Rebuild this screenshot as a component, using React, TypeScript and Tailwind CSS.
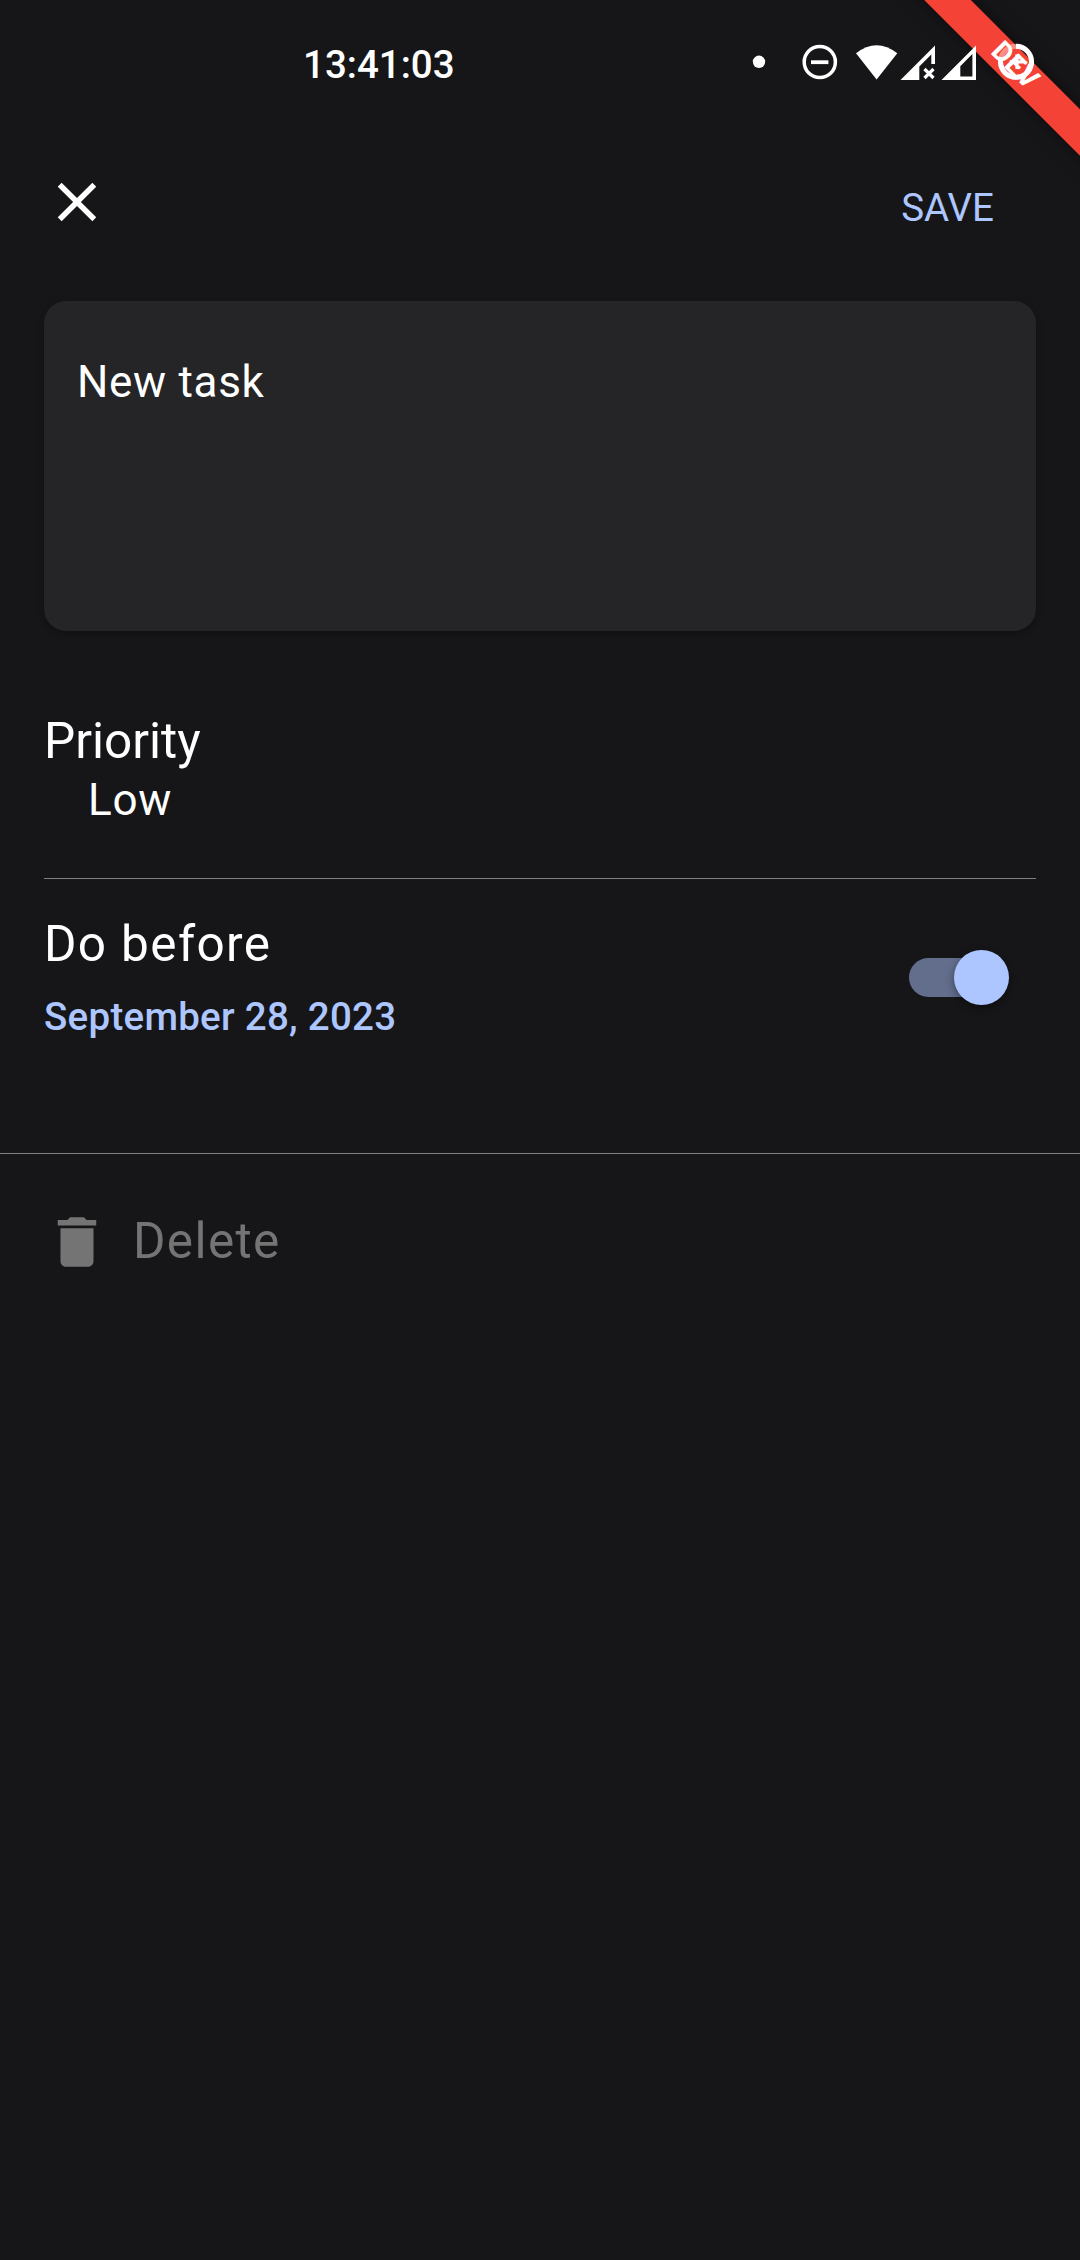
import type { ReactNode } from "react";

function Icon({ children, className }: { children: ReactNode; className: string }) {
  return (
    <svg viewBox="0 0 24 24" fill="currentColor" className={className}>
      {children}
    </svg>
  );
}

function StatusIcons() {
  return (
    <svg width="300" height="60" viewBox="740 30 300 60" fill="none" className="block">
      <circle cx="759" cy="61.8" r="6.2" fill="#fff" />
      <circle cx="819.8" cy="62" r="15.6" stroke="#fff" strokeWidth="3.5" />
      <path d="M811 62.2h17.4" stroke="#fff" strokeWidth="3.8" />
      <path d="M856 53.3Q876.5 37.2 897.3 53.3L876.6 79.5Z" fill="#fff" />
      <path d="M900.5 80L935 45.5V64H931.3V54.5L919.3 66.5V80Z" fill="#fff" />
      <path d="M924.5 69L933.5 78M933.5 69L924.5 78" stroke="#fff" strokeWidth="3.2" />
      <path d="M941.5 80L976 45.5V80ZM960.3 76.4H972.4V54L960.3 66.2Z" fill="#fff" fillRule="evenodd" />
      <circle cx="1016" cy="61.8" r="15.5" stroke="#fff" strokeOpacity="0.4" strokeWidth="5" />
      <path d="M1016 46.3A15.5 15.5 0 1 1 1001.2 57.3" stroke="#fff" strokeWidth="5" />
      <path d="M1017 54.5v14.6M1009.7 61.8h14.6" stroke="#fff" strokeWidth="3.2" />
    </svg>
  );
}

function DevRibbon() {
  return (
    <div className="absolute top-0 right-0 h-[220px] w-[220px] overflow-hidden">
      <div className="absolute top-[49.5px] left-[4px] flex h-[33px] w-[300px] rotate-45 items-center justify-center bg-[#f44336] pb-[3px] text-[28px] leading-none font-bold tracking-[0.5px] text-white shadow-[0_0_16px_rgba(0,0,0,0.5)]">
        DEV
      </div>
    </div>
  );
}

export default function App() {
  return (
    <div className="relative flex h-[2260px] w-[1080px] flex-col overflow-hidden bg-[#161618] font-['Roboto',sans-serif] text-white">
      <DevRibbon />
      <header className="relative flex h-[120px] items-start justify-between pt-[30px] pr-[40px] pl-[303px]">
        <span className="mt-[5px] text-[38.5px] leading-[60px] font-medium">13:41:03</span>
        <StatusIcons />
      </header>
      <nav className="flex h-[181px] items-start justify-between pr-[86px] pl-[44px]">
        <button aria-label="Close" className="mt-[49px]">
          <Icon className="h-[66px] w-[66px]">
            <path d="M19 6.41L17.59 5 12 10.59 6.41 5 5 6.41 10.59 12 5 17.59 6.41 19 12 13.41 17.59 19 19 17.59 13.41 12z" />
          </Icon>
        </button>
        <button className="mt-[58px] text-[38.5px] leading-[60px] text-[#adc6ff]">SAVE</button>
      </nav>
      <section className="mx-[44px] h-[330px] rounded-[22px] bg-[#252528] px-[33px] pt-[51px] text-[44px] leading-[60px] tracking-[0.6875px] shadow-[0_3px_6px_rgba(0,0,0,0.25)]">
        New task
      </section>
      <section className="mx-[44px] h-[248px] border-b border-[#808082] pt-[80px]">
        <h2 className="text-[49.5px] leading-[60px]">Priority</h2>
        <p className="pl-[44px] text-[44px] leading-[58px] tracking-[0.6875px]">Low</p>
      </section>
      <section className="flex h-[275px] items-start justify-between border-b border-[#808082] pr-[71px] pl-[44px]">
        <div className="pt-[35px]">
          <h2 className="text-[49.5px] leading-[60px] tracking-[1.375px]">Do before</h2>
          <p className="mt-[13px] text-[38.5px] leading-[60px] font-medium tracking-[0.275px] text-[#adc6ff]">
            September 28, 2023
          </p>
        </div>
        <button
          role="switch"
          aria-checked="true"
          aria-label="Do before"
          className="mt-[79px] flex h-[39px] w-[100px] items-center justify-end"
        >
          <span className="-mr-[46px] h-[39px] w-[91px] shrink-0 rounded-full bg-[#626e8c]" />
          <span className="relative h-[55px] w-[55px] shrink-0 rounded-full bg-[#adc6ff] shadow-[0_3px_8px_rgba(0,0,0,0.4)]" />
        </button>
      </section>
      <button className="flex h-[176px] items-center gap-[23px] pl-[44px] text-[#747475]">
        <Icon className="h-[66px] w-[66px]">
          <path d="M6 19c0 1.1.9 2 2 2h8c1.1 0 2-.9 2-2V7H6v12zM19 4h-3.5l-1-1h-5l-1 1H5v2h14V4z" />
        </Icon>
        <span className="mb-[2px] text-[49.5px] leading-[60px] tracking-[1.375px]">Delete</span>
      </button>
    </div>
  );
}
